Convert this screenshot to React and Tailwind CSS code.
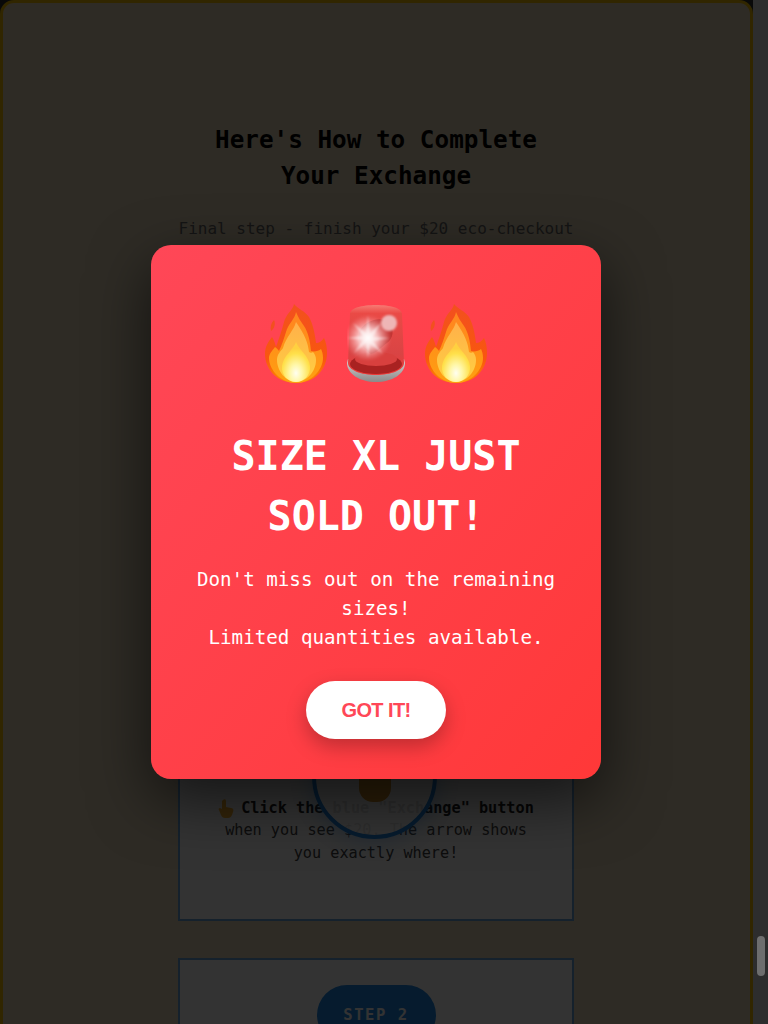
import { useId } from 'react'

const mono = 'font-["DejaVu_Sans_Mono",monospace]'

function Flame() {
  const id = useId()
  return (
    <svg width="62" height="79" viewBox="0 0 62 79" className="shrink-0">
      <defs>
        <linearGradient id={`${id}o`} x1="0" y1="0" x2="0" y2="1">
          <stop offset="0" stopColor="#f2501f" />
          <stop offset="0.7" stopColor="#f9560f" />
          <stop offset="1" stopColor="#ff8a00" />
        </linearGradient>
        <linearGradient id={`${id}m`} x1="0" y1="0" x2="0" y2="1">
          <stop offset="0" stopColor="#ff8420" />
          <stop offset="1" stopColor="#ffa010" />
        </linearGradient>
        <linearGradient id={`${id}l`} x1="0" y1="0" x2="0" y2="1">
          <stop offset="0" stopColor="#ffb04a" />
          <stop offset="1" stopColor="#ffd040" />
        </linearGradient>
        <radialGradient id={`${id}c`} cx="0.5" cy="0.78" r="0.62">
          <stop offset="0" stopColor="#fffef0" />
          <stop offset="0.35" stopColor="#fff7a8" />
          <stop offset="0.8" stopColor="#ffe04a" />
          <stop offset="1" stopColor="#ffd040" />
        </radialGradient>
      </defs>
      <path d="M9 16c-3 3-4 7-3 11 3-2 5-7 3-11z" fill="#f2501f" />
      <path
        d="M29 0c-1 6-8 10-10 18-2 8-5 16-8 25-1-4-2-7-4-10-4 5-7 10-7 17 0 15 12 29 31 29s31-14 31-30c0-6-1-11-3-15-2 3-5 5-8 5-1-9-3-19-7-26C40 7 33 5 29 0z"
        fill={`url(#${id}o)`}
      />
      <path
        d="M31 8c-1 7-8 12-10 20-2 6-4 13-7 19-1-1-2-3-4-4-3 4-6 7-6 11 0 12 12 25 27 25s27-13 27-25c0-4-1-7-2-9-2 2-7 3-10 2-1-11-3-19-7-25-3-4-6-9-8-14z"
        fill={`url(#${id}m)`}
      />
      <path
        d="M31 18c-2 8-10 15-13 26-2 3-6 6-6 12 0 11 9 22 19 22s20-10 20-22c0-3-1-6-3-8-1 1-3 1-4 0-1-9-4-17-13-30z"
        fill={`url(#${id}l)`}
      />
      <path
        d="M31 38c-2 7-13 14-14 24-1 9 6 16 14 16s15-7 14-16c-1-10-11-16-14-24z"
        fill={`url(#${id}c)`}
      />
    </svg>
  )
}

function Siren() {
  const id = useId()
  return (
    <svg width="58" height="78" viewBox="0 0 58 78" className="shrink-0">
      <defs>
        <linearGradient id={`${id}d`} x1="0" y1="0" x2="0" y2="1">
          <stop offset="0" stopColor="#f77b74" />
          <stop offset="0.12" stopColor="#ea4a46" />
          <stop offset="0.7" stopColor="#d94444" />
          <stop offset="1" stopColor="#ee3836" />
        </linearGradient>
        <linearGradient id={`${id}b`} x1="0" y1="0" x2="0" y2="1">
          <stop offset="0" stopColor="#d8d4d4" />
          <stop offset="1" stopColor="#8a8a8a" />
        </linearGradient>
        <radialGradient id={`${id}g`}>
          <stop offset="0" stopColor="#ffffff" />
          <stop offset="0.4" stopColor="#ffdcdc" stopOpacity="0.85" />
          <stop offset="1" stopColor="#ffaaaa" stopOpacity="0" />
        </radialGradient>
        <filter id={`${id}s`}>
          <feGaussianBlur stdDeviation="1.2" />
        </filter>
      </defs>
      <path d="M0 58c0 11 13 19 29 19s29-8 29-19l-1-4H1z" fill={`url(#${id}b)`} />
      <path
        d="M3 9C3 3 15 0 29 0s26 3 26 9l2 49c0 7-13 12-28 12S1 65 1 58z"
        fill={`url(#${id}d)`}
      />
      <ellipse cx="29" cy="59" rx="26" ry="10" fill="#a92221" />
      <ellipse cx="29" cy="54" rx="21" ry="7" fill="#d8403e" />
      <path d="M12 28c4-12 22-18 30-10 6 6 4 16-2 20-8 6-9 9-16 11-6-4-14-12-12-21z" fill="#c23433" />
      <g filter={`url(#${id}s)`}>
        <ellipse cx="42" cy="18" rx="8" ry="8" fill="#eeb6b6" />
        <circle cx="21" cy="33" r="23" fill={`url(#${id}g)`} />
        <path
          d="M21 10l2 18 11-10-8 14 17 1-17 3 10 13-13-10-2 14-2-15-12 10 9-13-16-2 16-2-10-13 13 10z"
          fill="#fff"
          opacity="0.5"
        />
      </g>
    </svg>
  )
}

function PointingHand() {
  return (
    <svg width="16" height="19" viewBox="0 0 16 19" className="mr-[7px] inline-block shrink-0 align-[-4px]">
      <path
        d="M5 1c1-1 3-1 3 1v6l5 1c2 0 3 2 2 4l-1 3c-1 2-2 3-4 3H7c-2 0-3-1-4-3L1 11c-1-1 0-2 1-2l2 1V2z"
        fill="#ffb52e"
      />
    </svg>
  )
}

function StepPill({ label }) {
  return (
    <div className="flex h-[60px] w-[119px] shrink-0 items-center justify-center self-center rounded-[30px] bg-[#1e88e5] pt-[1px] text-[15.5px] leading-[23px] font-bold tracking-[1.6px] text-white">
      {label}
    </div>
  )
}

export default function App() {
  return (
    <div className="flex h-[1024px] overflow-hidden bg-[#2d2d2d]">
      <main className="relative h-[1024px] w-[753px] shrink-0 overflow-hidden">
        <div className={`flex h-[1300px] flex-col items-center rounded-[14px] border-[3px] border-[#f3bf00] bg-[#e6d5b7] pt-[119px] pr-[1px] ${mono}`}>
          <h1 className="text-center text-[24.3px] leading-[36px] font-bold text-black">
            Here's How to Complete
            <br />
            Your Exchange
          </h1>
          <p className="mt-[23px] text-[16px] leading-[24px] text-[#666]">
            Final step - finish your $20 eco-checkout
          </p>

          <section className="relative mt-[31px] flex h-[649px] w-[396px] shrink-0 flex-col border-2 border-[#6aa5dc] bg-white/95 pt-[25px] pb-[54px] text-center text-[15.2px] leading-[22.8px] text-[#444]">
            <StepPill label="STEP 1" />
            <div className="mt-auto px-[44px]">
              <div className="-mx-[30px] flex items-center justify-center whitespace-nowrap">
                <PointingHand />
                <strong className="text-[#222]">Click the blue "Exchange" button</strong>
              </div>
              <p>when you see $20. The arrow shows you exactly where!</p>
            </div>
            <div className="absolute top-[440px] left-[132px] flex h-[125px] w-[125px] items-end justify-center rounded-full border-[4px] border-[#1e88e5] bg-white/85 pb-[33px] shadow-[0_0_24px_rgba(30,136,229,0.45)]">
              <div className="h-[30px] w-[32px] rounded-b-[14px] bg-[#d9942a]" />
            </div>
          </section>

          <section className="mt-[37px] flex h-[300px] w-[396px] shrink-0 flex-col border-2 border-[#6aa5dc] bg-white/95 pt-[25px]">
            <StepPill label="STEP 2" />
          </section>
        </div>

        <div className="absolute inset-0 flex items-center justify-center bg-black/80 pr-[1px]">
          <div className={`flex h-[534px] w-[450px] flex-col items-center rounded-[20px] bg-gradient-to-br from-[#ff4757] to-[#ff3838] px-[40px] pt-[59px] text-center text-white shadow-[0_20px_60px_rgba(0,0,0,0.6)] ${mono}`}>
            <div className="flex h-[79px] w-[222px] items-center justify-between">
              <Flame />
              <Siren />
              <Flame />
            </div>
            <h2 className="mt-[43px] text-[40px] leading-[60px] font-bold">
              SIZE XL JUST
              <br />
              SOLD OUT!
            </h2>
            <p className="mt-[19px] text-[19.2px] leading-[29px]">
              Don't miss out on the remaining sizes!
              <br />
              Limited quantities available.
            </p>
            <button className='mt-[29px] h-[58px] w-[140px] rounded-[29px] bg-white font-["Liberation_Sans",sans-serif] text-[20px] font-bold tracking-[-0.6px] text-[#ff4757] shadow-[0_8px_20px_rgba(0,0,0,0.25)]'>
              GOT IT!
            </button>
          </div>
        </div>
      </main>

      <aside className="w-[15px] shrink-0 pt-[936px] pl-[4px]">
        <div className="h-[40px] w-[8px] rounded-full bg-[#6e6e6e]" />
      </aside>
    </div>
  )
}
